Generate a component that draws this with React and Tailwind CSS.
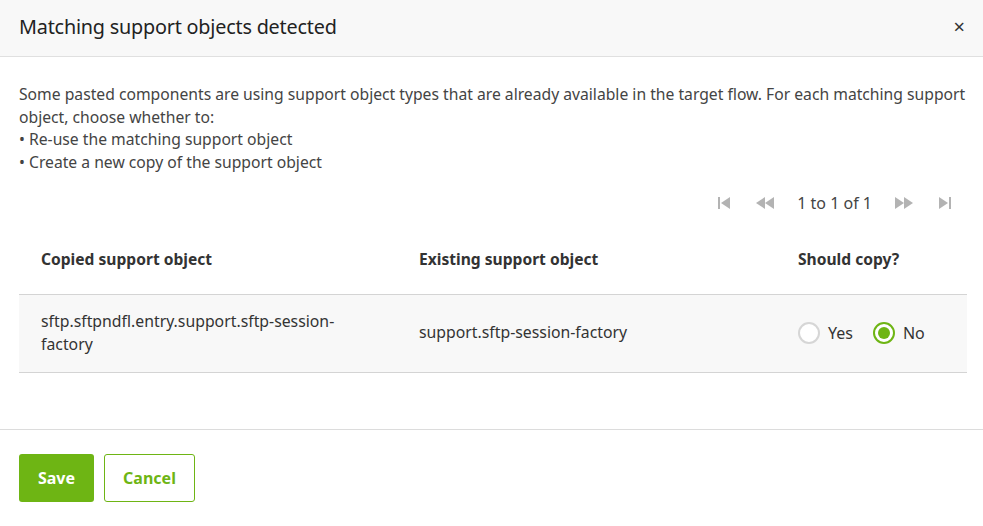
import { useState } from "react";

const font = { fontFamily: '"Noto Sans", "Open Sans", sans-serif' };

function PagerIcon({ type }) {
  // simple grey triangles, like the ag-grid style pager
  const paths = {
    first: (
      <>
        <rect x="1" y="2" width="2" height="12" />
        <path d="M13 2 L4 8 L13 14 Z" />
      </>
    ),
    prev: (
      <>
        <path d="M10 2 L1 8 L10 14 Z" />
        <path d="M19 2 L10 8 L19 14 Z" />
      </>
    ),
    next: (
      <>
        <path d="M1 2 L10 8 L1 14 Z" />
        <path d="M10 2 L19 8 L10 14 Z" />
      </>
    ),
    last: (
      <>
        <path d="M1 2 L10 8 L1 14 Z" />
        <rect x="11" y="2" width="2" height="12" />
      </>
    ),
  };
  const w = type === "prev" || type === "next" ? 20 : 14;
  return (
    <svg width={w} height="16" viewBox={`0 0 ${w} 16`} fill="#b3b3b3">
      {paths[type]}
    </svg>
  );
}

function Radio({ checked, label, onClick }) {
  return (
    <label className="flex items-center gap-[8px] cursor-pointer" onClick={onClick}>
      <span
        className={
          "w-[22px] h-[22px] rounded-full flex items-center justify-center bg-white " +
          (checked ? "border-2 border-[#6eb514]" : "border-2 border-[#d6d6d6]")
        }
      >
        {checked && <span className="w-[12px] h-[12px] rounded-full bg-[#6eb514]" />}
      </span>
      <span className="text-[16px] text-[#333]">{label}</span>
    </label>
  );
}

export default function App() {
  const [copy, setCopy] = useState(false);

  return (
    <div className="w-[983px] h-[526px] bg-white flex flex-col text-[#333]" style={font}>
      {/* Header */}
      <div className="h-[57px] shrink-0 bg-[#f8f8f8] border-b border-[#e0e0e0] flex items-center justify-between pl-[19px] pr-[18px]">
        <h1 className="text-[19.8px] text-[#222] -mt-[3px] tracking-[-0.2px]">Matching support objects detected</h1>
        <button className="text-[20px] leading-none text-[#333] -mt-[2px]">×</button>
      </div>

      {/* Body */}
      <div className="flex-1 pl-[19px] pr-[16px] pt-[26px]">
        <div className="text-[15.7px] leading-[22.7px] text-[#444]">
          <p>
            Some pasted components are using support object types that are already available in the target flow. For each matching support object, choose whether to:
          </p>
          <p>• Re-use the matching support object</p>
          <p>• Create a new copy of the support object</p>
        </div>

        {/* Pager */}
        <div className="flex items-center justify-end mt-[18px] h-[22px] pr-[15px] text-[16px] text-[#444]">
          <PagerIcon type="first" />
          <span className="ml-[24px] flex"><PagerIcon type="prev" /></span>
          <span className="ml-[22px] mr-[22px]">1 to 1 of 1</span>
          <PagerIcon type="next" />
          <span className="ml-[24px] flex"><PagerIcon type="last" /></span>
        </div>

        {/* Table */}
        <div className="mt-[12px]">
          <div className="grid grid-cols-[400px_379px_1fr] h-[69px] items-center border-b border-[#d4d4d4] text-[15.6px] font-bold text-[#333]">
            <div className="pl-[22px]">Copied support object</div>
            <div>Existing support object</div>
            <div>Should copy?</div>
          </div>
          <div className="grid grid-cols-[400px_379px_1fr] h-[78px] items-center bg-[#f8f8f8] border-b border-[#d4d4d4] text-[15.8px] text-[#333]">
            <div className="pl-[22px] leading-[23px] pr-[60px]">
              sftp.sftpndfl.entry.support.sftp-session-factory
            </div>
            <div>support.sftp-session-factory</div>
            <div className="flex items-center gap-[20px]">
              <Radio checked={copy} label="Yes" onClick={() => setCopy(true)} />
              <Radio checked={!copy} label="No" onClick={() => setCopy(false)} />
            </div>
          </div>
        </div>
      </div>

      {/* Footer */}
      <div className="h-[97px] shrink-0 border-t border-[#dcdcdc] flex items-center gap-[10px] pl-[19px] pb-[1px]">
        <button className="w-[75px] h-[48px] rounded-[3px] bg-[#6eb514] text-white font-bold text-[16px]">
          Save
        </button>
        <button className="w-[91px] h-[48px] rounded-[3px] border border-[#6eb514] bg-white text-[#6eb514] font-bold text-[16px]">
          Cancel
        </button>
      </div>
    </div>
  );
}
